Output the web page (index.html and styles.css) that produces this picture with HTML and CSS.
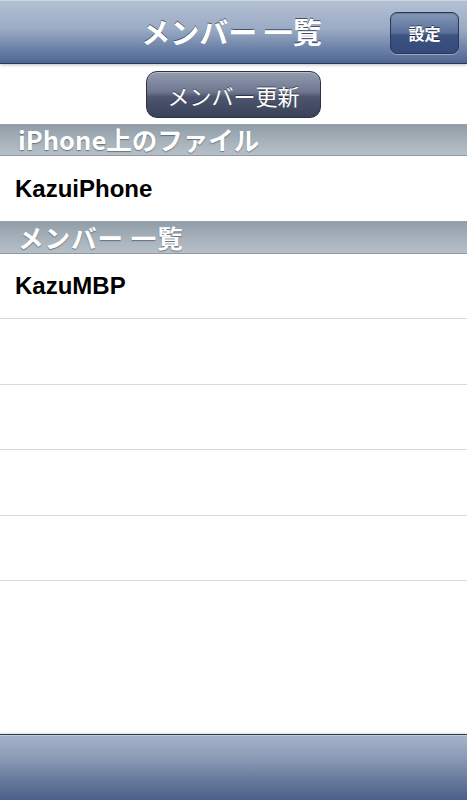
FILE: index.html
```html
<!DOCTYPE html>
<html lang="ja">
<head>
<meta charset="utf-8">
<link rel="stylesheet" href="styles.css">
</head>
<body>
<div class="screen">
  <header class="navbar">
    <div class="nav-title">メンバー 一覧</div>
    <button class="nav-btn">設定</button>
  </header>
  <main class="content">
    <div class="refresh-area">
      <button class="refresh-btn">メンバー更新</button>
    </div>
    <div class="section-header">iPhone上のファイル</div>
    <div class="row first">KazuiPhone</div>
    <div class="section-header second">メンバー 一覧</div>
    <div class="row first sep">KazuMBP</div>
    <div class="row sep"></div>
    <div class="row sep"></div>
    <div class="row sep"></div>
    <div class="row sep"></div>
  </main>
  <footer class="toolbar"></footer>
</div>
</body>
</html>
```
FILE: styles.css
```css
html, body {
  margin: 0;
  padding: 0;
  background: #fff;
}
.screen {
  width: 467px;
  height: 800px;
  display: flex;
  flex-direction: column;
  overflow: hidden;
  font-family: "Liberation Sans", "Noto Sans CJK JP", sans-serif;
}
.navbar {
  position: relative;
  height: 64px;
  flex: 0 0 64px;
  box-sizing: border-box;
  background: linear-gradient(#b4c0d4 0%, #9aabc4 45%, #6e84a8 75%, #4f6793 100%);
  border-top: 1px solid #cdd5e2;
  border-bottom: 1px solid #2d3a52;
  display: flex;
  align-items: center;
  justify-content: center;
  z-index: 2;
  box-shadow: 0 1px 3px rgba(0,0,0,0.25);
}
.nav-title {
  color: #fff;
  font-family: "Noto Sans CJK JP", sans-serif;
  font-weight: 700;
  font-size: 29px;
  text-shadow: 0 -1px 0 rgba(40,50,70,0.75);
  margin-top: -3px;
  margin-left: -4px;
}
.nav-btn {
  position: absolute;
  right: 8px;
  top: 11px;
  width: 69px;
  height: 42px;
  border-radius: 7px;
  border: 1px solid #2a3856;
  background: linear-gradient(#8598b8 0%, #5a709a 50%, #3c5282 55%, #344a7a 100%);
  box-shadow: 0 1px 0 rgba(255,255,255,0.35), inset 0 1px 1px rgba(0,0,0,0.2);
  color: #fff;
  font-family: "Noto Sans CJK JP", sans-serif;
  font-weight: 700;
  font-size: 16px;
  text-shadow: 0 -1px 0 rgba(0,0,0,0.5);
  padding: 0;
}
.content {
  flex: 1;
  display: flex;
  flex-direction: column;
}
.refresh-area {
  height: 60px;
  display: flex;
  justify-content: center;
  align-items: flex-start;
  padding-top: 7px;
  box-sizing: border-box;
}
.refresh-btn {
  width: 175px;
  height: 47px;
  border-radius: 11px;
  border: 1px solid #2c3246;
  background: linear-gradient(#949cb0 0%, #6d768e 45%, #4d566f 55%, #3a4259 100%);
  box-shadow: inset 0 1px 0 rgba(255,255,255,0.35);
  color: #fff;
  font-family: "Noto Sans CJK JP", sans-serif;
  font-weight: 400;
  font-size: 22px;
  text-shadow: 0 -1px 0 rgba(0,0,0,0.45);
  padding: 0;
}
.section-header {
  height: 32px;
  box-sizing: border-box;
  border-top: 1px solid #97a2ab;
  border-bottom: 1px solid #8e99a3;
  background: linear-gradient(#909da8 0%, #a5b0b9 50%, #b7c0c8 100%);
  color: #fff;
  font-family: "Noto Sans CJK JP", sans-serif;
  font-weight: 700;
  font-size: 25.5px;
  line-height: 28px;
  padding-left: 18px;
  text-shadow: 0 1px 1px rgba(60,70,80,0.6);
}
.section-header.second {
  height: 33px;
  line-height: 29px;
  letter-spacing: 1px;
}
.row {
  height: 65px;
  box-sizing: border-box;
  display: flex;
  align-items: center;
  padding-left: 15px;
  font-family: "Liberation Sans", sans-serif;
  font-weight: 700;
  font-size: 24px;
  color: #000;
}
.row.sep {
  height: 65.4px;
  border-bottom: 1px solid #d9d9d9;
}
.toolbar {
  height: 66px;
  flex: 0 0 66px;
  box-sizing: border-box;
  border-top: 1px solid #2d3a50;
  background: linear-gradient(#a6b4ca 0%, #8797b3 40%, #66799c 70%, #4a6089 100%);
  box-shadow: 0 -1px 2px rgba(0,0,0,0.12), inset 0 1px 0 #c0cbdb;
}
```
